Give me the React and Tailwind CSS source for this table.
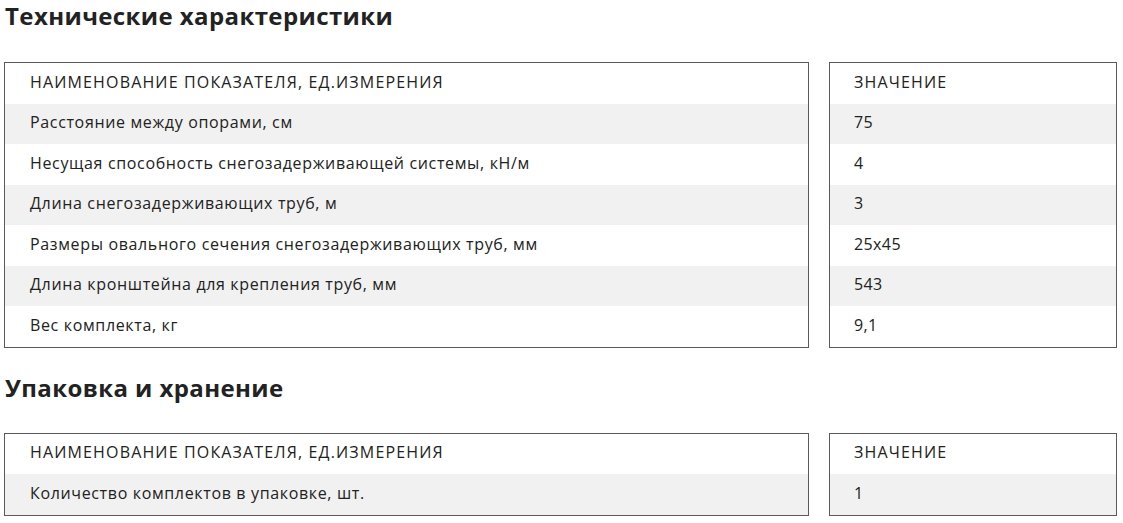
const SPECS = [
  { name: 'Расстояние между опорами, см', value: '75' },
  { name: 'Несущая способность снегозадерживающей системы, кН/м', value: '4' },
  { name: 'Длина снегозадерживающих труб, м', value: '3' },
  { name: 'Размеры овального сечения снегозадерживающих труб, мм', value: '25x45' },
  { name: 'Длина кронштейна для крепления труб, мм', value: '543' },
  { name: 'Вес комплекта, кг', value: '9,1' },
]

const PACKING = [
  { name: 'Количество комплектов в упаковке, шт.', value: '1' },
]

const font = { fontFamily: '"Open Sans", "Noto Sans", sans-serif' }

function Table({ rows }) {
  return (
    <div className="flex gap-[20px] text-[16px] text-[#222]">
      <div className="w-[805px] border border-[#5a5a5a]">
        <div className="h-[40.5px] flex items-center pl-[25px] pb-[3px] tracking-[1.15px]">НАИМЕНОВАНИЕ ПОКАЗАТЕЛЯ, ЕД.ИЗМЕРЕНИЯ</div>
        {rows.map((r, i) => (
          <div key={i} className={`h-[40.5px] flex items-center pl-[25px] pb-[3px] tracking-[0.65px] ${i % 2 === 0 ? 'bg-[#f1f1f1]' : 'bg-white'}`}>
            {r.name}
          </div>
        ))}
      </div>
      <div className="w-[288px] border border-[#5a5a5a]">
        <div className="h-[40.5px] flex items-center pl-[24px] pb-[3px] tracking-[1.15px]">ЗНАЧЕНИЕ</div>
        {rows.map((r, i) => (
          <div key={i} className={`h-[40.5px] flex items-center pl-[24px] pb-[3px] tracking-[0.4px] ${i % 2 === 0 ? 'bg-[#f1f1f1]' : 'bg-white'}`}>
            {r.value}
          </div>
        ))}
      </div>
    </div>
  )
}

export default function App() {
  return (
    <div className="min-h-screen bg-white pl-[4px]" style={font}>
      <h2 className="text-[24px] leading-[32px] font-bold tracking-[0.4px] text-[#222] pl-[1px]">Технические характеристики</h2>
      <div className="mt-[30px]">
        <Table rows={SPECS} />
      </div>
      <h2 className="mt-[24px] text-[24px] leading-[32px] font-bold tracking-[0.4px] text-[#222] pl-[1px]">Упаковка и хранение</h2>
      <div className="mt-[29px]">
        <Table rows={PACKING} />
      </div>
    </div>
  )
}
